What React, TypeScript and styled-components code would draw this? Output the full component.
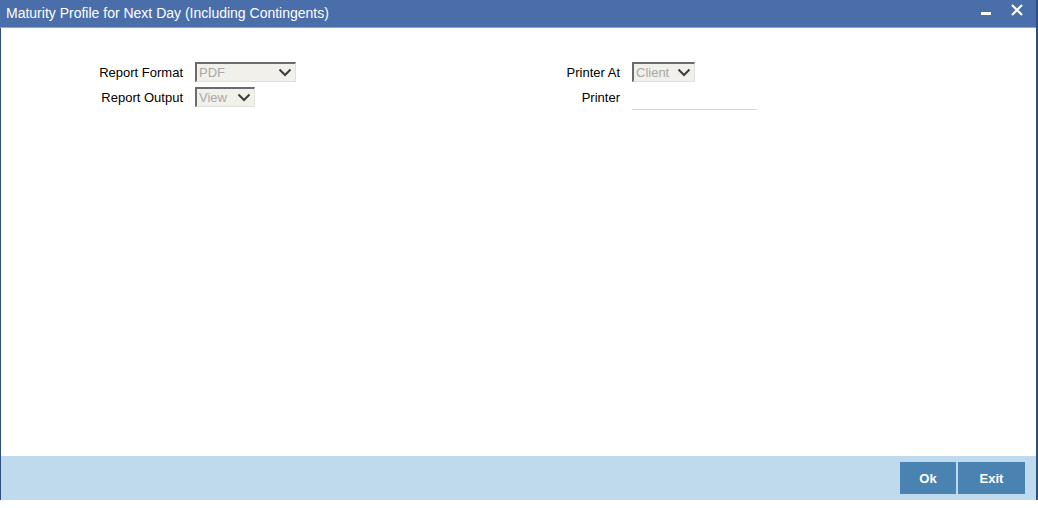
import React from "react";
import styled, { createGlobalStyle } from "styled-components";

const GlobalStyle = createGlobalStyle`
  html, body {
    margin: 0;
    padding: 0;
    background: #ffffff;
    font-family: "Liberation Sans", Arial, sans-serif;
  }
`;

const Window = styled.div`
  width: 1038px;
  height: 500px;
  box-sizing: border-box;
  display: flex;
  flex-direction: column;
  border-left: 1px solid #2d4f80;
  border-right: 2px solid #2d4f80;
  background: #ffffff;
`;

const TitleBar = styled.div`
  height: 28px;
  flex: none;
  display: flex;
  align-items: center;
  justify-content: space-between;
  background: #4a6ea9;
  border-bottom: 1px solid #93a6b3;
  padding: 0 0 0 6px;
  margin-left: -1px;
  box-sizing: border-box;
`;

const Title = styled.div`
  color: #ffffff;
  font-size: 14px;
  margin-top: -2px;
`;

const WindowControls = styled.div`
  align-self: flex-start;
  display: flex;
  align-items: flex-start;
  gap: 20px;
  padding: 4px 13px 0 0;
`;

const ControlButton = styled.button<{ $width: number }>`
  border: none;
  background: none;
  padding: 0;
  width: ${(p) => p.$width}px;
  height: 12px;
  display: block;
  cursor: pointer;
`;

const Body = styled.div`
  flex: 1;
  display: flex;
  align-items: flex-start;
  padding-top: 34px;
`;

const FieldGroup = styled.div`
  width: 437px;
  display: grid;
  grid-template-columns: 182px auto;
  grid-auto-rows: 20px;
  column-gap: 12px;
  row-gap: 5px;
  align-items: start;
`;

const Label = styled.label`
  font-size: 13px;
  color: #000000;
  text-align: right;
  line-height: 20px;
  margin-top: 1px;
`;

const SelectBox = styled.div<{ $width: number }>`
  width: ${(p) => p.$width}px;
  height: 20px;
  box-sizing: border-box;
  display: flex;
  align-items: center;
  justify-content: space-between;
  background: #f1f0eb;
  border-top: 2px solid #6b6b6b;
  border-left: 2px solid #6b6b6b;
  border-right: 1px solid #e0e0da;
  border-bottom: 1px solid #e0e0da;
  padding: 0 3px 0 2px;
  font-size: 13px;
  color: #a8a8a8;
`;

const TextField = styled.div`
  width: 125px;
  height: 23px;
  box-sizing: border-box;
  border-bottom: 1px solid #d4d4d4;
`;

const Footer = styled.div`
  height: 44px;
  flex: none;
  background: #bfdaec;
  display: flex;
  align-items: center;
  justify-content: flex-end;
  padding-right: 11px;
  gap: 2px;
`;

const FooterButton = styled.button<{ $width: number }>`
  width: ${(p) => p.$width}px;
  height: 32px;
  border: none;
  background: #4a83b1;
  color: #ffffff;
  font-family: "Liberation Sans", Arial, sans-serif;
  font-weight: bold;
  font-size: 13px;
  cursor: pointer;
`;

function Chevron() {
  return (
    <svg width="14" height="9" viewBox="0 0 14 9">
      <path d="M1.5 1.5 L7 7 L12.5 1.5" stroke="#3d3d3d" strokeWidth="2" fill="none" />
    </svg>
  );
}

function Select({ value, width }: { value: string; width: number }) {
  return (
    <SelectBox $width={width}>
      <span>{value}</span>
      <Chevron />
    </SelectBox>
  );
}

export default function App() {
  return (
    <>
      <GlobalStyle />
      <Window>
        <TitleBar>
          <Title>Maturity Profile for Next Day (Including Contingents)</Title>
          <WindowControls>
            <ControlButton $width={10} aria-label="minimize">
              <svg width="10" height="12" viewBox="0 0 10 12" style={{ display: "block" }}>
                <rect x="0" y="8" width="10" height="3" fill="#ffffff" />
              </svg>
            </ControlButton>
            <ControlButton $width={12} aria-label="close">
              <svg width="12" height="12" viewBox="0 0 12 12" style={{ display: "block" }}>
                <path d="M1 1 L11 11 M11 1 L1 11" stroke="#ffffff" strokeWidth="2.2" />
              </svg>
            </ControlButton>
          </WindowControls>
        </TitleBar>
        <Body>
          <FieldGroup>
            <Label>Report Format</Label>
            <Select value="PDF" width={101} />
            <Label>Report Output</Label>
            <Select value="View" width={60} />
          </FieldGroup>
          <FieldGroup>
            <Label>Printer At</Label>
            <Select value="Client" width={63} />
            <Label>Printer</Label>
            <TextField />
          </FieldGroup>
        </Body>
        <Footer>
          <FooterButton $width={56}>Ok</FooterButton>
          <FooterButton $width={67}>Exit</FooterButton>
        </Footer>
      </Window>
    </>
  );
}
